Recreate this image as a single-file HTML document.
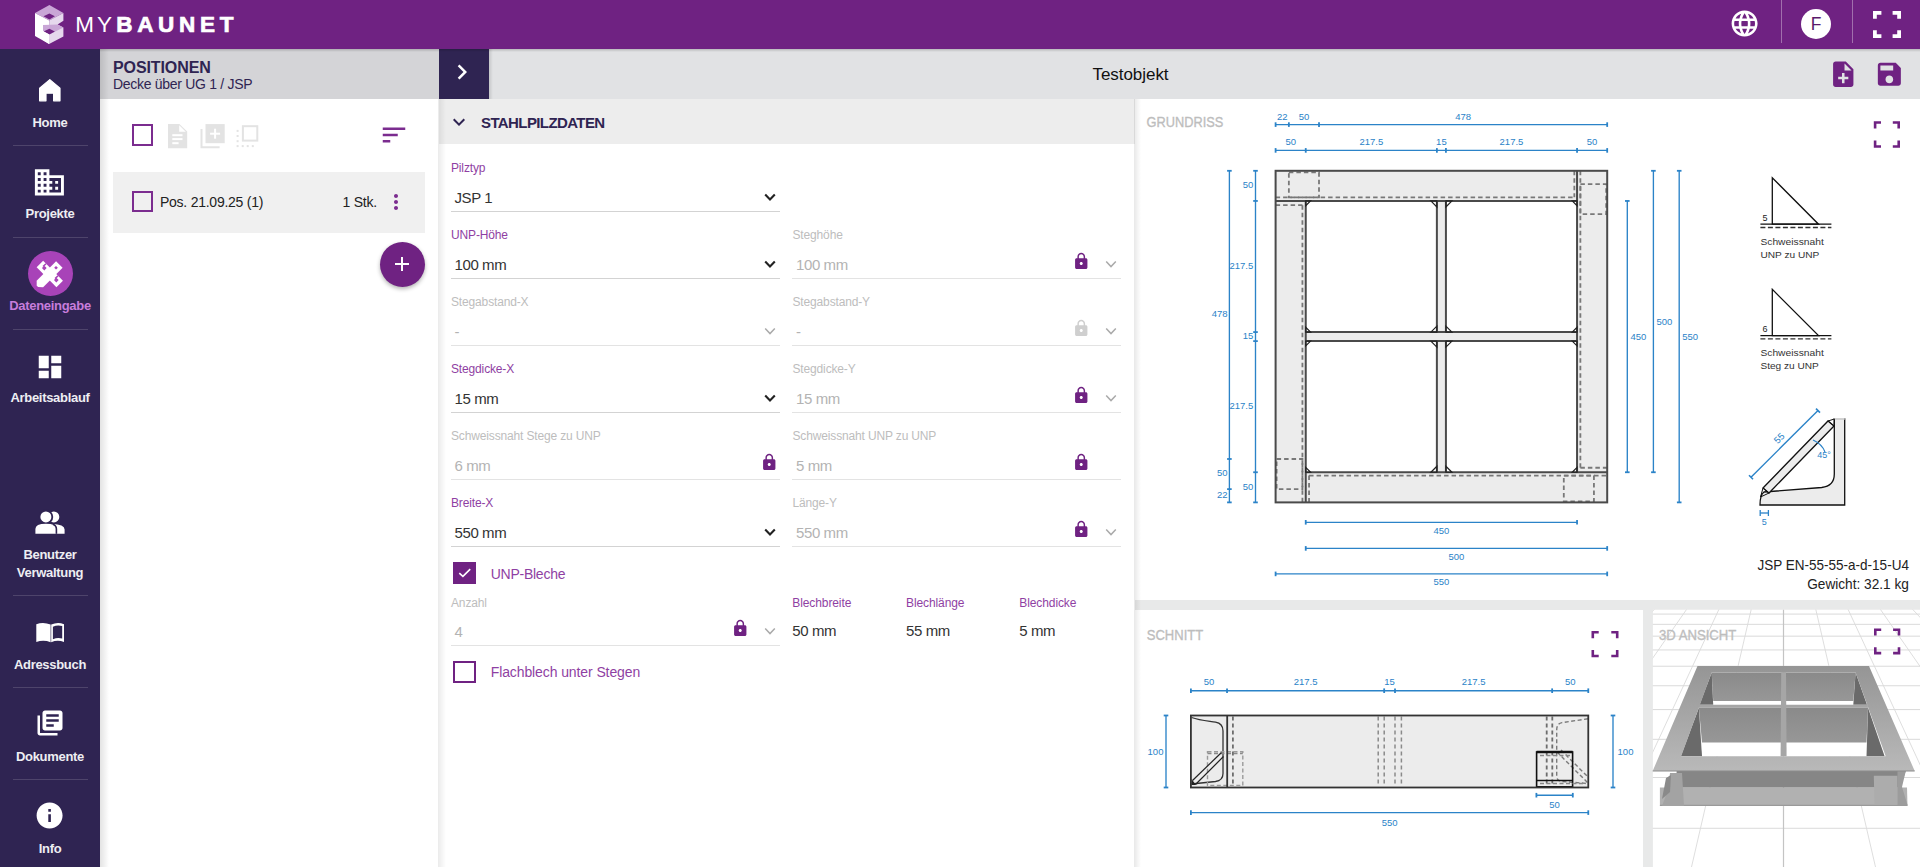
<!DOCTYPE html>
<html><head><meta charset="utf-8">
<style>
*{box-sizing:border-box;margin:0;padding:0}
html,body{width:1920px;height:867px;overflow:hidden;background:#fff;font-family:"Liberation Sans",sans-serif}
.r,.t,.ic{position:absolute}
.t{white-space:nowrap;line-height:1}
</style></head>
<body>
<div class="r" style="left:100px;top:49px;width:339px;height:818px;background:#fff"></div>
<div class="r" style="left:100px;top:49px;width:339px;height:50px;background:#d4d4d7"></div>
<div class="r" style="left:439px;top:49px;width:1481px;height:50px;background:#e1e2e4"></div>
<div class="r" style="left:439px;top:49px;width:50px;height:50px;background:#2f2452"></div>
<div class="r" style="left:439px;top:99px;width:696px;height:768px;background:#fff"></div>
<div class="r" style="left:439px;top:99px;width:696px;height:45px;background:#ededed"></div>
<div class="r" style="left:1135px;top:99px;width:785px;height:768px;background:#fff"></div>
<div class="r" style="left:1135px;top:600px;width:785px;height:10px;background:#e8e9e9"></div>
<div class="r" style="left:1643px;top:610px;width:10px;height:257px;background:#e8e9e9"></div>
<div class="r" style="left:438px;top:99px;width:8px;height:768px;background:linear-gradient(to right,rgba(0,0,0,0.08),rgba(0,0,0,0))"></div>
<div class="r" style="left:1134px;top:99px;width:7px;height:768px;background:linear-gradient(to right,rgba(0,0,0,0.09),rgba(0,0,0,0))"></div>
<div class="r" style="left:0px;top:0px;width:1920px;height:49px;background:#6f2282"></div>
<div class="r" style="left:0px;top:49px;width:1920px;height:3px;background:linear-gradient(rgba(0,0,0,0.18),rgba(0,0,0,0))"></div>
<svg class="ic" style="left:0;top:0;width:100px;height:49px" viewBox="0 0 100 49">
<polygon fill="#c9a6d6" points="49.4,4.9 63.4,12.9 49.2,20.5 35,13.1"/>
<polygon fill="#6f2282" points="49.4,13.4 54.9,16.3 49.4,19.5 43.5,16.3"/>
<polygon fill="#ffffff" points="35,13.1 49.2,20.5 49.1,43.9 35,36"/>
<polygon fill="#e6d8ed" points="49.2,20.5 63.4,12.9 63.4,20.8 57.6,24.6 63.4,27.6 63.4,36.5 49.1,43.9"/>
<polygon fill="#c9a6d6" points="43,25 57.6,24.6 63.4,27.6 49.4,34.4 43,31"/>
<polygon fill="#6f2282" points="49.4,28.8 54.9,31.6 49.4,34.4 43.5,31.6"/>
<polygon fill="#ffffff" points="43,31 49.4,34.4 49.1,43.9 43,40"/>
</svg>
<div class="t" style="left:75.3px;top:13.6px;font-size:22.5px;color:#fff;letter-spacing:2.9px">MY</div>
<div class="t" style="left:116.2px;top:13.6px;font-size:22.5px;color:#fff;font-weight:700;letter-spacing:4.7px;-webkit-text-stroke:0.7px #fff">BAUNET</div>
<svg class="ic" style="left:1728.6px;top:8.4px;width:31.2px;height:31.2px" viewBox="0 0 24 24"><path fill="#fff" d="M11.99 2C6.47 2 2 6.48 2 12s4.47 10 9.99 10C17.52 22 22 17.52 22 12S17.52 2 11.99 2zm6.93 6h-2.95c-.32-1.25-.78-2.450-1.38-3.56 1.84.63 3.37 1.91 4.33 3.56zM12 4.04c.83 1.2 1.48 2.53 1.91 3.96h-3.82c.43-1.43 1.08-2.76 1.91-3.96zM4.26 14C4.1 13.36 4 12.69 4 12s.1-1.36.26-2h3.38c-.08.66-.14 1.32-.14 2 0 .68.06 1.34.14 2H4.26zm.82 2h2.95c.32 1.25.78 2.45 1.380 3.56-1.84-.63-3.37-1.9-4.33-3.56zm2.95-8H5.08c.96-1.66 2.49-2.93 4.33-3.56C8.81 5.55 8.35 6.75 8.03 8zM12 19.96c-.83-1.2-1.48-2.53-1.91-3.96h3.82c-.43 1.43-1.08 2.76-1.91 3.96zM14.34 14H9.66c-.09-.66-.16-1.32-.16-2 0-.68.07-1.35.16-2h4.68c.09.65.16 1.32.16 2 0 .68-.07 1.34-.16 2zm.25 5.56c.6-1.11 1.06-2.31 1.38-3.56h2.95c-.96 1.65-2.49 2.93-4.33 3.560zM16.36 14c.08-.66.14-1.32.14-2 0-.68-.06-1.34-.14-2h3.38c.16.64.26 1.31.26 2s-.1 1.36-.26 2h-3.38z"/></svg>
<div class="r" style="left:1781px;top:0px;width:1px;height:43px;background:rgba(255,255,255,0.35)"></div>
<div class="r" style="left:1800.6px;top:8.8px;width:30.4px;height:30.4px;border-radius:50%;background:#fff"></div>
<div class="t" style="left:1516.2px;width:600px;text-align:center;top:16.0px;font-size:17.5px;color:#5a1a6b">F</div>
<div class="r" style="left:1852px;top:0px;width:1px;height:43px;background:rgba(255,255,255,0.35)"></div>
<svg class="ic" style="left:1873px;top:11px;width:28px;height:27px" viewBox="0 0 28 27">
<path fill="#fff" d="M0 0h8.4v3.8H3.8v4H0z M28 0h-8.4v3.8h4.6v4H28z M0 27h8.4v-3.8H3.8v-4H0z M28 27h-8.4v-3.8h4.6v-4H28z"/></svg>
<div class="r" style="left:0px;top:49px;width:100px;height:818px;background:#2f2452"></div>
<div class="r" style="left:100px;top:49px;width:9px;height:818px;background:linear-gradient(to right,rgba(0,0,0,0.11),rgba(0,0,0,0))"></div>
<div class="r" style="left:13px;top:145px;width:75px;height:1px;background:rgba(255,255,255,0.15)"></div>
<div class="r" style="left:13px;top:237px;width:75px;height:1px;background:rgba(255,255,255,0.15)"></div>
<div class="r" style="left:13px;top:329px;width:75px;height:1px;background:rgba(255,255,255,0.15)"></div>
<div class="r" style="left:13px;top:595px;width:75px;height:1px;background:rgba(255,255,255,0.15)"></div>
<div class="r" style="left:13px;top:687px;width:75px;height:1px;background:rgba(255,255,255,0.15)"></div>
<div class="r" style="left:13px;top:779px;width:75px;height:1px;background:rgba(255,255,255,0.15)"></div>
<svg class="ic" style="left:0;top:0;width:100px;height:120px" viewBox="0 0 100 120"><path fill="#fff" stroke="#fff" stroke-width="1.2" stroke-linejoin="round" d="M39.6 88.2 L49.8 79.6 L60 88.2 V100.8 H53.6 V93.2 H46 V100.8 H39.6 Z"/></svg>
<div class="t" style="left:-250.0px;width:600px;text-align:center;top:116.0px;font-size:13px;color:#eeeef2;font-weight:700;letter-spacing:-0.3px">Home</div>
<svg class="ic" style="left:32.1px;top:164.7px;width:34.8px;height:34.8px" viewBox="0 0 24 24"><path fill="#fff" d="M12 7V3H2v18h20V7H12zM6 19H4v-2h2v2zm0-4H4v-2h2v2zm0-4H4V9h2v2zm0-4H4V5h2v2zm4 12H8v-2h2v2zm0-4H8v-2h2v2zm0-4H8V9h2v2zm0-4H8V5h2v2zm10 12h-8v-2h2v-2h-2v-2h2v-2h-2V9h8v10zm-2-8h-2v2h2v-2zm0 4h-2v2h2v-2z"/></svg>
<div class="t" style="left:-250.0px;width:600px;text-align:center;top:207.0px;font-size:13px;color:#eeeef2;font-weight:700;letter-spacing:-0.3px">Projekte</div>
<div class="r" style="left:28.2px;top:251.2px;width:45px;height:45px;border-radius:50%;background:#a843b8"></div>
<svg class="ic" style="left:0;top:240px;width:100px;height:60px" viewBox="0 240 100 60"><g transform="translate(49.8 274) rotate(-45)"><path d="M-14 -4.6 H13.5 V4.6 H-14 L-17.5 1 V-1 Z" fill="#fff"/><rect x="7.5" y="-1.3" width="2.6" height="2.6" fill="#a843b8"/></g><g transform="translate(49.8 274) rotate(45)"><rect x="-14" y="-4.6" width="28" height="9.2" fill="#fff"/><path d="M-10 -4.6 V-1.2 H-7.2 V0.6 H-9 V-1.2" fill="none" stroke="#a843b8" stroke-width="1.5"/><path d="M7 -4.6 V-1.2 H9.8 V0.6 H8 V-1.2" fill="none" stroke="#a843b8" stroke-width="1.5"/></g></svg>
<div class="t" style="left:-250.0px;width:600px;text-align:center;top:299.0px;font-size:13px;color:#c77ddb;font-weight:700;letter-spacing:-0.3px">Dateneingabe</div>
<svg class="ic" style="left:35.4px;top:351.5px;width:30px;height:30px" viewBox="0 0 24 24"><path fill="#fff" d="M3 13h8V3H3v10zm0 8h8v-6H3v6zm10 0h8V11h-8v10zm0-18v6h8V3h-8z"/></svg>
<div class="t" style="left:-250.0px;width:600px;text-align:center;top:391.0px;font-size:13px;color:#eeeef2;font-weight:700;letter-spacing:-0.3px">Arbeitsablauf</div>
<svg class="ic" style="left:0;top:500px;width:100px;height:40px" viewBox="0 500 100 40"><circle cx="53.8" cy="516.9" r="5.5" fill="#fff"/><circle cx="45.9" cy="516.9" r="7.3" fill="#2f2452"/><circle cx="45.9" cy="516.9" r="5.5" fill="#fff"/><path d="M56.6 533.7 V528.5 Q56.6 524.3 52 524 Q64.6 524.3 64.6 529.5 V533.7 Z" fill="#fff"/><path d="M35.4 533.7 V529 Q35.4 523.8 45.9 523.8 Q56.4 523.8 56.4 529 V533.7 Z" fill="#fff" stroke="#2f2452" stroke-width="0"/><path d="M56.4 533.7 V529 Q56.4 525.5 53 524.2" stroke="#2f2452" stroke-width="1.6" fill="none"/></svg>
<div class="t" style="left:-250.0px;width:600px;text-align:center;top:547.6px;font-size:13px;color:#eeeef2;font-weight:700;letter-spacing:-0.3px">Benutzer</div>
<div class="t" style="left:-250.0px;width:600px;text-align:center;top:565.6px;font-size:13px;color:#eeeef2;font-weight:700;letter-spacing:-0.3px">Verwaltung</div>
<svg class="ic" style="left:0;top:600px;width:100px;height:60px" viewBox="0 600 100 60">
<path fill="#fff" d="M36.3 624.2 Q43.5 621.8 50.6 624.6 V642.2 Q43.5 639.6 36.3 642 Z"/>
<path fill="#fff" fill-rule="evenodd" d="M51.2 624.6 Q57.6 621.8 64 624.2 V642 Q57.6 639.6 51.2 642.2 Z M52.9 626.7 Q57.6 624.6 62.2 626.1 V638.6 Q57.6 637.2 52.9 639.3 Z"/></svg>
<div class="t" style="left:-250.0px;width:600px;text-align:center;top:658.0px;font-size:13px;color:#eeeef2;font-weight:700;letter-spacing:-0.3px">Adressbuch</div>
<svg class="ic" style="left:34.5px;top:708.2px;width:30px;height:30px" viewBox="0 0 24 24"><path fill="#fff" d="M4 6H2v14c0 1.1.9 2 2 2h14v-2H4V6zm16-4H8c-1.1 0-2 .9-2 2v12c0 1.1.9 2 2 2h12c1.1 0 2-.9 2-2V4c0-1.1-.9-2-2-2zm-1 9H9V9h10v2zm-4 4H9v-2h6v2zm4-8H9V5h10v2z"/></svg>
<div class="t" style="left:-250.0px;width:600px;text-align:center;top:750.0px;font-size:13px;color:#eeeef2;font-weight:700;letter-spacing:-0.3px">Dokumente</div>
<svg class="ic" style="left:34px;top:800px;width:31.2px;height:31.2px" viewBox="0 0 24 24"><path fill="#fff" d="M12 2C6.48 2 2 6.48 2 12s4.48 10 10 10 10-4.48 10-10S17.52 2 12 2zm1 15h-2v-6h2v6zm0-8h-2V7h2v2z"/></svg>
<div class="t" style="left:-250.0px;width:600px;text-align:center;top:841.6px;font-size:13px;color:#eeeef2;font-weight:700;letter-spacing:-0.3px">Info</div>
<div class="t" style="left:113.0px;top:59.7px;font-size:16px;color:#2f2452;font-weight:700;letter-spacing:-0.1px">POSITIONEN</div>
<div class="t" style="left:113.0px;top:77.1px;font-size:14px;color:#2f2452;letter-spacing:-0.3px">Decke über UG 1 / JSP</div>
<div class="r" style="left:132px;top:124px;width:21px;height:22px;border:2px solid #7b2c8f"></div>
<svg class="ic" style="left:150px;top:110px;width:120px;height:50px" viewBox="150 110 120 50">
<path fill="#e3e3e3" d="M168 124.1 H179.4 L187.2 131.6 V148.3 H168 Z"/>
<path fill="#fff" d="M179.2 125.2 V131.8 H185.8 Z"/>
<rect x="172.3" y="134.2" width="10.2" height="2" fill="#fff"/><rect x="172.3" y="138.1" width="10.2" height="2" fill="#fff"/><rect x="172.3" y="142.2" width="6.3" height="2" fill="#fff"/>
<path fill="#e3e3e3" d="M200.5 129.1 H202.5 V146.3 H219.6 V148.3 H200.5 Z"/>
<rect x="205.5" y="124.1" width="19.2" height="19.1" fill="#e3e3e3"/>
<rect x="210.1" y="132.7" width="10" height="2" fill="#fff"/><rect x="214.1" y="128.7" width="2" height="10" fill="#fff"/>
<rect x="242.9" y="126.2" width="14.4" height="14.4" fill="none" stroke="#e3e3e3" stroke-width="2"/>
<g fill="#e3e3e3"><rect x="236.6" y="129.9" width="2" height="2"/><rect x="236.6" y="135" width="2" height="2"/><rect x="236.6" y="140.2" width="2" height="2"/><rect x="236.6" y="145.1" width="2" height="2"/><rect x="241.7" y="145.1" width="2" height="2"/><rect x="246.7" y="145.1" width="2" height="2"/><rect x="251.8" y="145.1" width="2" height="2"/></g>
</svg>
<svg class="ic" style="left:378.5px;top:119.5px;width:30px;height:30px" viewBox="0 0 24 24"><path fill="#7b2c8f" d="M3 18h6v-2H3v2zM3 6v2h18V6H3zm0 7h12v-2H3v2z"/></svg>
<div class="r" style="left:113px;top:172px;width:312px;height:61px;background:#f0f0f0"></div>
<div class="r" style="left:132px;top:191px;width:21px;height:21px;border:2px solid #7b2c8f"></div>
<div class="t" style="left:160.0px;top:195.1px;font-size:14px;color:#222;letter-spacing:-0.25px">Pos. 21.09.25 (1)</div>
<div class="t" style="left:-223.0px;width:600px;text-align:right;top:195.1px;font-size:14px;color:#222;letter-spacing:-0.2px">1 Stk.</div>
<svg class="ic" style="left:383.5px;top:189.5px;width:24px;height:24px" viewBox="0 0 24 24"><path fill="#7b2c8f" d="M12 8c1.1 0 2-.9 2-2s-.9-2-2-2-2 .9-2 2 .9 2 2 2zm0 2c-1.1 0-2 .9-2 2s.9 2 2 2 2-.9 2-2-.9-2-2-2zm0 6c-1.1 0-2 .9-2 2s.9 2 2 2 2-.9 2-2-.9-2-2-2z"/></svg>
<div class="r" style="left:379.8px;top:241.5px;width:45px;height:45px;border-radius:50%;background:#6f2282;box-shadow:0 2px 4px rgba(0,0,0,0.3)"></div>
<svg class="ic" style="left:390.3px;top:252px;width:24px;height:24px" viewBox="0 0 24 24"><path fill="#fff" d="M19 13h-6v6h-2v-6H5v-2h6V5h2v6h6v2z"/></svg>
<svg class="ic" style="left:446.8px;top:57.3px;width:30px;height:30px" viewBox="0 0 24 24"><path fill="#fff" d="M10 6L8.59 7.41 13.17 12l-4.58 4.59L10 18l6-6z"/></svg>
<div class="r" style="left:488.5px;top:49px;width:4px;height:50px;background:linear-gradient(to right,rgba(0,0,0,0.12),rgba(0,0,0,0))"></div>
<div class="t" style="left:830.5px;width:600px;text-align:center;top:66.1px;font-size:17px;color:#111;letter-spacing:-0.05px">Testobjekt</div>
<svg class="ic" style="left:1828px;top:58.7px;width:30.5px;height:30.5px" viewBox="0 0 24 24"><path fill="#6f2282" d="M14 2H6c-1.1 0-1.99.9-1.99 2L4 20c0 1.1.89 2 1.99 2H18c1.1 0 2-.9 2-2V8l-6-6zm2 14h-3v3h-2v-3H8v-2h3v-3h2v3h3v2zm-3-7V3.5L18.5 9H13z"/></svg>
<svg class="ic" style="left:1874.2px;top:58.7px;width:30.7px;height:30.7px" viewBox="0 0 24 24"><path fill="#6f2282" d="M17 3H5c-1.11 0-2 .9-2 2v14c0 1.1.89 2 2 2h14c1.1 0 2-.9 2-2V7l-4-4zm-5 16c-1.66 0-3-1.34-3-3s1.34-3 3-3 3 1.34 3 3-1.34 3-3 3zm3-10H5V5h10v4z"/></svg>
<svg class="ic" style="left:446.8px;top:110.2px;width:24px;height:24px" viewBox="0 0 24 24"><path fill="#2f2452" d="M16.59 8.59L12 13.17 7.41 8.59 6 10l6 6 6-6z"/></svg>
<div class="t" style="left:481.0px;top:115.3px;font-size:15px;color:#2f2452;font-weight:700;letter-spacing:-0.6px">STAHLPILZDATEN</div>
<div class="t" style="left:451.0px;top:161.7px;font-size:12px;color:#8f3fa3;letter-spacing:-0.15px">Pilztyp</div>
<div class="t" style="left:454.5px;top:189.5px;font-size:15px;color:#333;letter-spacing:-0.4px">JSP 1</div>
<div class="r" style="left:450.5px;top:211px;width:329.5px;height:1px;background:#d3d3d3"></div>
<svg class="ic" style="left:764px;top:192.8px;width:12px;height:9px" viewBox="0 0 12 9"><path fill="none" stroke="#222" stroke-width="2.1" d="M1.2 1.6 L6 6.6 L10.8 1.6"/></svg>
<div class="t" style="left:451.0px;top:228.7px;font-size:12px;color:#8f3fa3;letter-spacing:-0.15px">UNP-Höhe</div>
<div class="t" style="left:454.5px;top:256.5px;font-size:15px;color:#333;letter-spacing:-0.4px">100 mm</div>
<div class="r" style="left:450.5px;top:278px;width:329.5px;height:1px;background:#d3d3d3"></div>
<svg class="ic" style="left:764px;top:259.8px;width:12px;height:9px" viewBox="0 0 12 9"><path fill="none" stroke="#222" stroke-width="2.1" d="M1.2 1.6 L6 6.6 L10.8 1.6"/></svg>
<div class="t" style="left:792.5px;top:228.7px;font-size:12px;color:#bdbdbd;letter-spacing:-0.15px">Steghöhe</div>
<div class="t" style="left:796.0px;top:256.5px;font-size:15px;color:#b3b3b3;letter-spacing:-0.4px">100 mm</div>
<div class="r" style="left:792px;top:278px;width:329px;height:1px;background:#e3e3e3"></div>
<svg class="ic" style="left:1072.3px;top:252.4px;width:18.5px;height:18.5px" viewBox="0 0 24 24"><path fill="#6f2282" d="M18 8h-1V6c0-2.76-2.24-5-5-5S7 3.24 7 6v2H6c-1.1 0-2 .9-2 2v10c0 1.1.9 2 2 2h12c1.1 0 2-.9 2-2V10c0-1.1-.9-2-2-2zm-6 9c-1.1 0-2-.9-2-2s.9-2 2-2 2 .9 2 2-.9 2-2 2zm3.1-9H8.9V6c0-1.71 1.39-3.1 3.1-3.1 1.71 0 3.1 1.39 3.1 3.1v2z"/></svg>
<svg class="ic" style="left:1105px;top:259.8px;width:12px;height:9px" viewBox="0 0 12 9"><path fill="none" stroke="#aaaaaa" stroke-width="1.5" d="M1.2 1.6 L6 6.6 L10.8 1.6"/></svg>
<div class="t" style="left:451.0px;top:295.7px;font-size:12px;color:#bdbdbd;letter-spacing:-0.15px">Stegabstand-X</div>
<div class="t" style="left:454.5px;top:323.5px;font-size:15px;color:#b3b3b3;letter-spacing:-0.4px">-</div>
<div class="r" style="left:450.5px;top:345px;width:329.5px;height:1px;background:#e3e3e3"></div>
<svg class="ic" style="left:764px;top:326.8px;width:12px;height:9px" viewBox="0 0 12 9"><path fill="none" stroke="#aaaaaa" stroke-width="1.5" d="M1.2 1.6 L6 6.6 L10.8 1.6"/></svg>
<div class="t" style="left:792.5px;top:295.7px;font-size:12px;color:#bdbdbd;letter-spacing:-0.15px">Stegabstand-Y</div>
<div class="t" style="left:796.0px;top:323.5px;font-size:15px;color:#b3b3b3;letter-spacing:-0.4px">-</div>
<div class="r" style="left:792px;top:345px;width:329px;height:1px;background:#e3e3e3"></div>
<svg class="ic" style="left:1072.3px;top:319.4px;width:18.5px;height:18.5px" viewBox="0 0 24 24"><path fill="#cfcfcf" d="M18 8h-1V6c0-2.76-2.24-5-5-5S7 3.24 7 6v2H6c-1.1 0-2 .9-2 2v10c0 1.1.9 2 2 2h12c1.1 0 2-.9 2-2V10c0-1.1-.9-2-2-2zm-6 9c-1.1 0-2-.9-2-2s.9-2 2-2 2 .9 2 2-.9 2-2 2zm3.1-9H8.9V6c0-1.71 1.39-3.1 3.1-3.1 1.71 0 3.1 1.39 3.1 3.1v2z"/></svg>
<svg class="ic" style="left:1105px;top:326.8px;width:12px;height:9px" viewBox="0 0 12 9"><path fill="none" stroke="#aaaaaa" stroke-width="1.5" d="M1.2 1.6 L6 6.6 L10.8 1.6"/></svg>
<div class="t" style="left:451.0px;top:362.7px;font-size:12px;color:#8f3fa3;letter-spacing:-0.15px">Stegdicke-X</div>
<div class="t" style="left:454.5px;top:390.5px;font-size:15px;color:#333;letter-spacing:-0.4px">15 mm</div>
<div class="r" style="left:450.5px;top:412px;width:329.5px;height:1px;background:#d3d3d3"></div>
<svg class="ic" style="left:764px;top:393.8px;width:12px;height:9px" viewBox="0 0 12 9"><path fill="none" stroke="#222" stroke-width="2.1" d="M1.2 1.6 L6 6.6 L10.8 1.6"/></svg>
<div class="t" style="left:792.5px;top:362.7px;font-size:12px;color:#bdbdbd;letter-spacing:-0.15px">Stegdicke-Y</div>
<div class="t" style="left:796.0px;top:390.5px;font-size:15px;color:#b3b3b3;letter-spacing:-0.4px">15 mm</div>
<div class="r" style="left:792px;top:412px;width:329px;height:1px;background:#e3e3e3"></div>
<svg class="ic" style="left:1072.3px;top:386.4px;width:18.5px;height:18.5px" viewBox="0 0 24 24"><path fill="#6f2282" d="M18 8h-1V6c0-2.76-2.24-5-5-5S7 3.24 7 6v2H6c-1.1 0-2 .9-2 2v10c0 1.1.9 2 2 2h12c1.1 0 2-.9 2-2V10c0-1.1-.9-2-2-2zm-6 9c-1.1 0-2-.9-2-2s.9-2 2-2 2 .9 2 2-.9 2-2 2zm3.1-9H8.9V6c0-1.71 1.39-3.1 3.1-3.1 1.71 0 3.1 1.39 3.1 3.1v2z"/></svg>
<svg class="ic" style="left:1105px;top:393.8px;width:12px;height:9px" viewBox="0 0 12 9"><path fill="none" stroke="#aaaaaa" stroke-width="1.5" d="M1.2 1.6 L6 6.6 L10.8 1.6"/></svg>
<div class="t" style="left:451.0px;top:429.7px;font-size:12px;color:#bdbdbd;letter-spacing:-0.15px">Schweissnaht Stege zu UNP</div>
<div class="t" style="left:454.5px;top:457.5px;font-size:15px;color:#b3b3b3;letter-spacing:-0.4px">6 mm</div>
<div class="r" style="left:450.5px;top:479px;width:329.5px;height:1px;background:#e3e3e3"></div>
<svg class="ic" style="left:760.3px;top:453.4px;width:18.5px;height:18.5px" viewBox="0 0 24 24"><path fill="#6f2282" d="M18 8h-1V6c0-2.76-2.24-5-5-5S7 3.24 7 6v2H6c-1.1 0-2 .9-2 2v10c0 1.1.9 2 2 2h12c1.1 0 2-.9 2-2V10c0-1.1-.9-2-2-2zm-6 9c-1.1 0-2-.9-2-2s.9-2 2-2 2 .9 2 2-.9 2-2 2zm3.1-9H8.9V6c0-1.71 1.39-3.1 3.1-3.1 1.71 0 3.1 1.39 3.1 3.1v2z"/></svg>
<div class="t" style="left:792.5px;top:429.7px;font-size:12px;color:#bdbdbd;letter-spacing:-0.15px">Schweissnaht UNP zu UNP</div>
<div class="t" style="left:796.0px;top:457.5px;font-size:15px;color:#b3b3b3;letter-spacing:-0.4px">5 mm</div>
<div class="r" style="left:792px;top:479px;width:329px;height:1px;background:#e3e3e3"></div>
<svg class="ic" style="left:1072.3px;top:453.4px;width:18.5px;height:18.5px" viewBox="0 0 24 24"><path fill="#6f2282" d="M18 8h-1V6c0-2.76-2.24-5-5-5S7 3.24 7 6v2H6c-1.1 0-2 .9-2 2v10c0 1.1.9 2 2 2h12c1.1 0 2-.9 2-2V10c0-1.1-.9-2-2-2zm-6 9c-1.1 0-2-.9-2-2s.9-2 2-2 2 .9 2 2-.9 2-2 2zm3.1-9H8.9V6c0-1.71 1.39-3.1 3.1-3.1 1.71 0 3.1 1.39 3.1 3.1v2z"/></svg>
<div class="t" style="left:451.0px;top:496.7px;font-size:12px;color:#8f3fa3;letter-spacing:-0.15px">Breite-X</div>
<div class="t" style="left:454.5px;top:524.5px;font-size:15px;color:#333;letter-spacing:-0.4px">550 mm</div>
<div class="r" style="left:450.5px;top:546px;width:329.5px;height:1px;background:#d3d3d3"></div>
<svg class="ic" style="left:764px;top:527.8px;width:12px;height:9px" viewBox="0 0 12 9"><path fill="none" stroke="#222" stroke-width="2.1" d="M1.2 1.6 L6 6.6 L10.8 1.6"/></svg>
<div class="t" style="left:792.5px;top:496.7px;font-size:12px;color:#bdbdbd;letter-spacing:-0.15px">Länge-Y</div>
<div class="t" style="left:796.0px;top:524.5px;font-size:15px;color:#b3b3b3;letter-spacing:-0.4px">550 mm</div>
<div class="r" style="left:792px;top:546px;width:329px;height:1px;background:#e3e3e3"></div>
<svg class="ic" style="left:1072.3px;top:520.4px;width:18.5px;height:18.5px" viewBox="0 0 24 24"><path fill="#6f2282" d="M18 8h-1V6c0-2.76-2.24-5-5-5S7 3.24 7 6v2H6c-1.1 0-2 .9-2 2v10c0 1.1.9 2 2 2h12c1.1 0 2-.9 2-2V10c0-1.1-.9-2-2-2zm-6 9c-1.1 0-2-.9-2-2s.9-2 2-2 2 .9 2 2-.9 2-2 2zm3.1-9H8.9V6c0-1.71 1.39-3.1 3.1-3.1 1.71 0 3.1 1.39 3.1 3.1v2z"/></svg>
<svg class="ic" style="left:1105px;top:527.8px;width:12px;height:9px" viewBox="0 0 12 9"><path fill="none" stroke="#aaaaaa" stroke-width="1.5" d="M1.2 1.6 L6 6.6 L10.8 1.6"/></svg>
<div class="r" style="left:453px;top:561.5px;width:22.5px;height:22.5px;background:#6f2282"></div>
<svg class="ic" style="left:455.5px;top:564px;width:17.5px;height:17.5px" viewBox="0 0 24 24"><path fill="none" stroke="#fff" stroke-width="2.2" d="M4.5 12.5 L9.5 17 L19.5 7"/></svg>
<div class="t" style="left:490.7px;top:567.1px;font-size:14px;color:#8f3fa3;letter-spacing:-0.25px">UNP-Bleche</div>
<div class="t" style="left:451.0px;top:596.5px;font-size:12px;color:#bdbdbd;letter-spacing:-0.15px">Anzahl</div>
<div class="t" style="left:454.5px;top:623.5px;font-size:15px;color:#b3b3b3;letter-spacing:-0.4px">4</div>
<div class="r" style="left:450.5px;top:645px;width:329.5px;height:1px;background:#e3e3e3"></div>
<svg class="ic" style="left:731.3px;top:619.4px;width:18.5px;height:18.5px" viewBox="0 0 24 24"><path fill="#6f2282" d="M18 8h-1V6c0-2.76-2.24-5-5-5S7 3.24 7 6v2H6c-1.1 0-2 .9-2 2v10c0 1.1.9 2 2 2h12c1.1 0 2-.9 2-2V10c0-1.1-.9-2-2-2zm-6 9c-1.1 0-2-.9-2-2s.9-2 2-2 2 .9 2 2-.9 2-2 2zm3.1-9H8.9V6c0-1.71 1.39-3.1 3.1-3.1 1.71 0 3.1 1.39 3.1 3.1v2z"/></svg>
<svg class="ic" style="left:764px;top:626.8px;width:12px;height:9px" viewBox="0 0 12 9"><path fill="none" stroke="#aaaaaa" stroke-width="1.5" d="M1.2 1.6 L6 6.6 L10.8 1.6"/></svg>
<div class="t" style="left:792.3px;top:596.5px;font-size:12px;color:#8f3fa3;letter-spacing:-0.1px">Blechbreite</div>
<div class="t" style="left:906.0px;top:596.5px;font-size:12px;color:#8f3fa3;letter-spacing:-0.1px">Blechlänge</div>
<div class="t" style="left:1019.3px;top:596.5px;font-size:12px;color:#8f3fa3;letter-spacing:-0.1px">Blechdicke</div>
<div class="t" style="left:792.3px;top:623.1px;font-size:15px;color:#333;letter-spacing:-0.4px">50 mm</div>
<div class="t" style="left:906.0px;top:623.1px;font-size:15px;color:#333;letter-spacing:-0.4px">55 mm</div>
<div class="t" style="left:1019.3px;top:623.1px;font-size:15px;color:#333;letter-spacing:-0.4px">5 mm</div>
<div class="r" style="left:453px;top:660.5px;width:22.5px;height:22px;border:2px solid #6f2282"></div>
<div class="t" style="left:490.7px;top:664.8px;font-size:14px;color:#8f3fa3;letter-spacing:-0.1px">Flachblech unter Stegen</div>
<svg class="ic" style="left:0;top:0;width:1920px;height:867px" viewBox="0 0 1920 867" font-family="Liberation Sans, sans-serif"><rect x="1275.60" y="170.80" width="331.60" height="331.59" fill="#ececec" stroke="none" stroke-width="0"/>
<rect x="1305.74" y="200.95" width="271.31" height="271.30" fill="#fff" stroke="none" stroke-width="0"/>
<rect x="1436.88" y="200.95" width="9.04" height="271.30" fill="#ececec" stroke="none" stroke-width="0"/>
<rect x="1305.74" y="332.08" width="271.31" height="9.04" fill="#ececec" stroke="none" stroke-width="0"/>
<line x1="1275.60" y1="197.33" x2="1574.34" y2="197.33" stroke="#787878" stroke-width="1.8" stroke-dasharray="4.5,3"/>
<line x1="1574.34" y1="170.80" x2="1574.34" y2="197.33" stroke="#787878" stroke-width="1.8" stroke-dasharray="4.5,3"/>
<line x1="1580.37" y1="170.80" x2="1580.37" y2="467.73" stroke="#787878" stroke-width="1.8" stroke-dasharray="4.5,3"/>
<line x1="1580.37" y1="467.73" x2="1607.19" y2="467.73" stroke="#787878" stroke-width="1.8" stroke-dasharray="4.5,3"/>
<line x1="1309.06" y1="475.57" x2="1607.19" y2="475.57" stroke="#787878" stroke-width="1.8" stroke-dasharray="4.5,3"/>
<line x1="1309.06" y1="475.57" x2="1309.06" y2="502.39" stroke="#787878" stroke-width="1.8" stroke-dasharray="4.5,3"/>
<line x1="1302.43" y1="205.17" x2="1302.43" y2="502.39" stroke="#787878" stroke-width="1.8" stroke-dasharray="4.5,3"/>
<line x1="1275.60" y1="205.17" x2="1302.43" y2="205.17" stroke="#787878" stroke-width="1.8" stroke-dasharray="4.5,3"/>
<rect x="1288.86" y="172.30" width="30.14" height="25.03" fill="none" stroke="#787878" stroke-width="1.8" stroke-dasharray="4.5,3"/>
<rect x="1580.37" y="184.06" width="25.83" height="30.14" fill="none" stroke="#787878" stroke-width="1.8" stroke-dasharray="4.5,3"/>
<rect x="1563.79" y="475.57" width="30.14" height="25.83" fill="none" stroke="#787878" stroke-width="1.8" stroke-dasharray="4.5,3"/>
<rect x="1276.60" y="458.99" width="25.83" height="30.14" fill="none" stroke="#787878" stroke-width="1.8" stroke-dasharray="4.5,3"/>
<rect x="1275.60" y="170.80" width="331.60" height="331.59" fill="none" stroke="#4a4a4a" stroke-width="2"/>
<line x1="1275.60" y1="200.95" x2="1577.05" y2="200.95" stroke="#4a4a4a" stroke-width="2"/>
<line x1="1577.05" y1="170.80" x2="1577.05" y2="472.25" stroke="#4a4a4a" stroke-width="2"/>
<line x1="1305.74" y1="472.25" x2="1607.19" y2="472.25" stroke="#4a4a4a" stroke-width="2"/>
<line x1="1305.74" y1="200.95" x2="1305.74" y2="502.39" stroke="#4a4a4a" stroke-width="2"/>
<line x1="1305.74" y1="332.08" x2="1577.05" y2="332.08" stroke="#4a4a4a" stroke-width="2"/>
<line x1="1305.74" y1="341.12" x2="1577.05" y2="341.12" stroke="#4a4a4a" stroke-width="2"/>
<line x1="1436.88" y1="200.95" x2="1436.88" y2="332.08" stroke="#4a4a4a" stroke-width="2"/>
<line x1="1445.92" y1="200.95" x2="1445.92" y2="332.08" stroke="#4a4a4a" stroke-width="2"/>
<line x1="1436.88" y1="341.12" x2="1436.88" y2="472.25" stroke="#4a4a4a" stroke-width="2"/>
<line x1="1445.92" y1="341.12" x2="1445.92" y2="472.25" stroke="#4a4a4a" stroke-width="2"/>
<polygon points="1436.88,200.95 1430.88,200.95 1436.88,206.95" fill="none" stroke="#222" stroke-width="1.2"/>
<polygon points="1436.88,332.08 1430.88,332.08 1436.88,326.08" fill="none" stroke="#222" stroke-width="1.2"/>
<polygon points="1436.88,341.12 1430.88,341.12 1436.88,347.12" fill="none" stroke="#222" stroke-width="1.2"/>
<polygon points="1436.88,472.25 1430.88,472.25 1436.88,466.25" fill="none" stroke="#222" stroke-width="1.2"/>
<polygon points="1445.92,200.95 1451.92,200.95 1445.92,206.95" fill="none" stroke="#222" stroke-width="1.2"/>
<polygon points="1445.92,332.08 1451.92,332.08 1445.92,326.08" fill="none" stroke="#222" stroke-width="1.2"/>
<polygon points="1445.92,341.12 1451.92,341.12 1445.92,347.12" fill="none" stroke="#222" stroke-width="1.2"/>
<polygon points="1445.92,472.25 1451.92,472.25 1445.92,466.25" fill="none" stroke="#222" stroke-width="1.2"/>
<polygon points="1305.74,332.08 1310.54,332.08 1305.74,327.28" fill="none" stroke="#222" stroke-width="1.2"/>
<polygon points="1305.74,341.12 1310.54,341.12 1305.74,345.92" fill="none" stroke="#222" stroke-width="1.2"/>
<polygon points="1305.74,200.95 1310.54,200.95 1305.74,205.75" fill="none" stroke="#222" stroke-width="1.2"/>
<polygon points="1305.74,472.25 1310.54,472.25 1305.74,467.45" fill="none" stroke="#222" stroke-width="1.2"/>
<polygon points="1577.05,332.08 1572.25,332.08 1577.05,327.28" fill="none" stroke="#222" stroke-width="1.2"/>
<polygon points="1577.05,341.12 1572.25,341.12 1577.05,345.92" fill="none" stroke="#222" stroke-width="1.2"/>
<polygon points="1577.05,200.95 1572.25,200.95 1577.05,205.75" fill="none" stroke="#222" stroke-width="1.2"/>
<polygon points="1577.05,472.25 1572.25,472.25 1577.05,467.45" fill="none" stroke="#222" stroke-width="1.2"/>
<line x1="1275.60" y1="124.60" x2="1607.19" y2="124.60" stroke="#2b83c8" stroke-width="1.35"/>
<line x1="1275.60" y1="122.30" x2="1275.60" y2="126.90" stroke="#2b83c8" stroke-width="1.8"/>
<line x1="1288.86" y1="122.30" x2="1288.86" y2="126.90" stroke="#2b83c8" stroke-width="1.8"/>
<line x1="1319.01" y1="122.30" x2="1319.01" y2="126.90" stroke="#2b83c8" stroke-width="1.8"/>
<line x1="1607.19" y1="122.30" x2="1607.19" y2="126.90" stroke="#2b83c8" stroke-width="1.8"/>
<text x="1282.23" y="120.30" font-size="9.5" fill="#2b83c8" text-anchor="middle">22</text>
<text x="1303.94" y="120.30" font-size="9.5" fill="#2b83c8" text-anchor="middle">50</text>
<text x="1463.10" y="120.30" font-size="9.5" fill="#2b83c8" text-anchor="middle">478</text>
<line x1="1275.60" y1="150.40" x2="1607.19" y2="150.40" stroke="#2b83c8" stroke-width="1.35"/>
<line x1="1275.60" y1="148.10" x2="1275.60" y2="152.70" stroke="#2b83c8" stroke-width="1.8"/>
<line x1="1305.74" y1="148.10" x2="1305.74" y2="152.70" stroke="#2b83c8" stroke-width="1.8"/>
<line x1="1436.88" y1="148.10" x2="1436.88" y2="152.70" stroke="#2b83c8" stroke-width="1.8"/>
<line x1="1445.92" y1="148.10" x2="1445.92" y2="152.70" stroke="#2b83c8" stroke-width="1.8"/>
<line x1="1577.05" y1="148.10" x2="1577.05" y2="152.70" stroke="#2b83c8" stroke-width="1.8"/>
<line x1="1607.19" y1="148.10" x2="1607.19" y2="152.70" stroke="#2b83c8" stroke-width="1.8"/>
<text x="1290.67" y="145.00" font-size="9.5" fill="#2b83c8" text-anchor="middle">50</text>
<text x="1371.31" y="145.00" font-size="9.5" fill="#2b83c8" text-anchor="middle">217.5</text>
<text x="1441.40" y="145.00" font-size="9.5" fill="#2b83c8" text-anchor="middle">15</text>
<text x="1511.48" y="145.00" font-size="9.5" fill="#2b83c8" text-anchor="middle">217.5</text>
<text x="1592.12" y="145.00" font-size="9.5" fill="#2b83c8" text-anchor="middle">50</text>
<line x1="1229.40" y1="170.80" x2="1229.40" y2="502.39" stroke="#2b83c8" stroke-width="1.35"/>
<line x1="1227.10" y1="170.80" x2="1231.70" y2="170.80" stroke="#2b83c8" stroke-width="1.8"/>
<line x1="1227.10" y1="458.99" x2="1231.70" y2="458.99" stroke="#2b83c8" stroke-width="1.8"/>
<line x1="1227.10" y1="489.13" x2="1231.70" y2="489.13" stroke="#2b83c8" stroke-width="1.8"/>
<line x1="1227.10" y1="502.39" x2="1231.70" y2="502.39" stroke="#2b83c8" stroke-width="1.8"/>
<text x="1227.50" y="317.29" font-size="9.5" fill="#2b83c8" text-anchor="end">478</text>
<text x="1227.50" y="476.46" font-size="9.5" fill="#2b83c8" text-anchor="end">50</text>
<text x="1227.50" y="498.16" font-size="9.5" fill="#2b83c8" text-anchor="end">22</text>
<line x1="1255.50" y1="170.80" x2="1255.50" y2="502.39" stroke="#2b83c8" stroke-width="1.35"/>
<line x1="1253.20" y1="170.80" x2="1257.80" y2="170.80" stroke="#2b83c8" stroke-width="1.8"/>
<line x1="1253.20" y1="200.95" x2="1257.80" y2="200.95" stroke="#2b83c8" stroke-width="1.8"/>
<line x1="1253.20" y1="332.08" x2="1257.80" y2="332.08" stroke="#2b83c8" stroke-width="1.8"/>
<line x1="1253.20" y1="341.12" x2="1257.80" y2="341.12" stroke="#2b83c8" stroke-width="1.8"/>
<line x1="1253.20" y1="472.25" x2="1257.80" y2="472.25" stroke="#2b83c8" stroke-width="1.8"/>
<line x1="1253.20" y1="502.39" x2="1257.80" y2="502.39" stroke="#2b83c8" stroke-width="1.8"/>
<text x="1253.30" y="188.27" font-size="9.5" fill="#2b83c8" text-anchor="end">50</text>
<text x="1253.30" y="268.91" font-size="9.5" fill="#2b83c8" text-anchor="end">217.5</text>
<text x="1253.30" y="339.00" font-size="9.5" fill="#2b83c8" text-anchor="end">15</text>
<text x="1253.30" y="409.08" font-size="9.5" fill="#2b83c8" text-anchor="end">217.5</text>
<text x="1253.30" y="489.72" font-size="9.5" fill="#2b83c8" text-anchor="end">50</text>
<line x1="1627.30" y1="200.95" x2="1627.30" y2="472.25" stroke="#2b83c8" stroke-width="1.35"/>
<line x1="1625.00" y1="200.95" x2="1629.60" y2="200.95" stroke="#2b83c8" stroke-width="1.8"/>
<line x1="1625.00" y1="472.25" x2="1629.60" y2="472.25" stroke="#2b83c8" stroke-width="1.8"/>
<line x1="1653.40" y1="170.80" x2="1653.40" y2="472.25" stroke="#2b83c8" stroke-width="1.35"/>
<line x1="1651.10" y1="170.80" x2="1655.70" y2="170.80" stroke="#2b83c8" stroke-width="1.8"/>
<line x1="1651.10" y1="472.25" x2="1655.70" y2="472.25" stroke="#2b83c8" stroke-width="1.8"/>
<line x1="1679.20" y1="170.80" x2="1679.20" y2="502.39" stroke="#2b83c8" stroke-width="1.35"/>
<line x1="1676.90" y1="170.80" x2="1681.50" y2="170.80" stroke="#2b83c8" stroke-width="1.8"/>
<line x1="1676.90" y1="502.39" x2="1681.50" y2="502.39" stroke="#2b83c8" stroke-width="1.8"/>
<text x="1630.50" y="339.50" font-size="9.5" fill="#2b83c8" text-anchor="start">450</text>
<text x="1656.50" y="324.50" font-size="9.5" fill="#2b83c8" text-anchor="start">500</text>
<text x="1682.30" y="339.50" font-size="9.5" fill="#2b83c8" text-anchor="start">550</text>
<line x1="1305.74" y1="522.30" x2="1577.05" y2="522.30" stroke="#2b83c8" stroke-width="1.35"/>
<line x1="1305.74" y1="520.00" x2="1305.74" y2="524.60" stroke="#2b83c8" stroke-width="1.8"/>
<line x1="1577.05" y1="520.00" x2="1577.05" y2="524.60" stroke="#2b83c8" stroke-width="1.8"/>
<line x1="1305.74" y1="548.40" x2="1607.19" y2="548.40" stroke="#2b83c8" stroke-width="1.35"/>
<line x1="1305.74" y1="546.10" x2="1305.74" y2="550.70" stroke="#2b83c8" stroke-width="1.8"/>
<line x1="1607.19" y1="546.10" x2="1607.19" y2="550.70" stroke="#2b83c8" stroke-width="1.8"/>
<line x1="1275.60" y1="573.90" x2="1607.19" y2="573.90" stroke="#2b83c8" stroke-width="1.35"/>
<line x1="1275.60" y1="571.60" x2="1275.60" y2="576.20" stroke="#2b83c8" stroke-width="1.8"/>
<line x1="1607.19" y1="571.60" x2="1607.19" y2="576.20" stroke="#2b83c8" stroke-width="1.8"/>
<text x="1441.40" y="533.70" font-size="9.5" fill="#2b83c8" text-anchor="middle">450</text>
<text x="1456.47" y="559.70" font-size="9.5" fill="#2b83c8" text-anchor="middle">500</text>
<text x="1441.40" y="584.70" font-size="9.5" fill="#2b83c8" text-anchor="middle">550</text>
<rect x="1190.90" y="715.50" width="397.38" height="72.00" fill="#ececec" stroke="none" stroke-width="0"/>
<path d="M1191.5 717.5 C1200 720.5 1208 721 1215.5 722.2 Q1223 723.5 1223 731 L1223 773.5 Q1223 780.5 1215.5 781.5 L1191.5 784" fill="none" stroke="#333" stroke-width="1.3"/>
<rect x="1207.50" y="751.70" width="35.30" height="33.70" fill="none" stroke="#9a9a9a" stroke-width="1.4" stroke-dasharray="4,2.5"/>
<line x1="1207.50" y1="753.50" x2="1242.80" y2="753.50" stroke="#8a8a8a" stroke-width="1.6" stroke-dasharray="4,2.5"/>
<line x1="1232.90" y1="716.50" x2="1232.90" y2="786.50" stroke="#6d6d6d" stroke-width="1.8" stroke-dasharray="4,3"/>
<line x1="1378.20" y1="716.50" x2="1378.20" y2="786.50" stroke="#8a8a8a" stroke-width="1.5" stroke-dasharray="4,3"/>
<line x1="1384.20" y1="716.50" x2="1384.20" y2="786.50" stroke="#8a8a8a" stroke-width="1.5" stroke-dasharray="4,3"/>
<line x1="1395.00" y1="716.50" x2="1395.00" y2="786.50" stroke="#8a8a8a" stroke-width="1.5" stroke-dasharray="4,3"/>
<line x1="1401.40" y1="716.50" x2="1401.40" y2="786.50" stroke="#8a8a8a" stroke-width="1.5" stroke-dasharray="4,3"/>
<line x1="1546.70" y1="716.50" x2="1546.70" y2="786.50" stroke="#6d6d6d" stroke-width="1.8" stroke-dasharray="4,3"/>
<line x1="1552.30" y1="716.50" x2="1552.30" y2="786.50" stroke="#6d6d6d" stroke-width="1.8" stroke-dasharray="4,3"/>
<path d="M1588 718.8 L1562 722.6 Q1556.7 723.5 1556.7 730 L1556.7 776 Q1556.7 781 1562 781.5 L1588 783.5" fill="none" stroke="#7a7a7a" stroke-width="1.4" stroke-dasharray="4,2.5"/>
<line x1="1557.00" y1="752.00" x2="1588.00" y2="783.00" stroke="#7a7a7a" stroke-width="1.4" stroke-dasharray="4,2.5"/>
<line x1="1561.00" y1="750.00" x2="1588.00" y2="777.00" stroke="#7a7a7a" stroke-width="1.4" stroke-dasharray="4,2.5"/>
<line x1="1192.50" y1="780.50" x2="1221.50" y2="752.50" stroke="#222" stroke-width="1.2"/>
<line x1="1195.50" y1="784.50" x2="1223.50" y2="756.50" stroke="#222" stroke-width="1.2"/>
<polygon points="1191.50,779.00 1191.50,785.00 1196.00,785.00" fill="#222" stroke="none" stroke-width="0"/>
<rect x="1536.60" y="752.00" width="36.00" height="34.80" fill="none" stroke="#111" stroke-width="1.6"/>
<line x1="1536.60" y1="752.00" x2="1572.60" y2="752.00" stroke="#111" stroke-width="2.6"/>
<line x1="1536.60" y1="780.50" x2="1572.60" y2="780.50" stroke="#111" stroke-width="1.6"/>
<line x1="1540.00" y1="755.50" x2="1570.00" y2="755.50" stroke="#888" stroke-width="1.3" stroke-dasharray="4,2.5"/>
<line x1="1540.00" y1="783.50" x2="1586.00" y2="783.50" stroke="#888" stroke-width="1.3" stroke-dasharray="4,2.5"/>
<rect x="1190.90" y="715.50" width="397.38" height="72.00" fill="none" stroke="#333" stroke-width="1.8"/>
<line x1="1227.20" y1="715.50" x2="1227.20" y2="787.50" stroke="#333" stroke-width="1.8"/>
<line x1="1190.90" y1="690.70" x2="1588.28" y2="690.70" stroke="#2b83c8" stroke-width="1.35"/>
<line x1="1190.90" y1="688.40" x2="1190.90" y2="693.00" stroke="#2b83c8" stroke-width="1.8"/>
<line x1="1227.03" y1="688.40" x2="1227.03" y2="693.00" stroke="#2b83c8" stroke-width="1.8"/>
<line x1="1384.17" y1="688.40" x2="1384.17" y2="693.00" stroke="#2b83c8" stroke-width="1.8"/>
<line x1="1395.01" y1="688.40" x2="1395.01" y2="693.00" stroke="#2b83c8" stroke-width="1.8"/>
<line x1="1552.15" y1="688.40" x2="1552.15" y2="693.00" stroke="#2b83c8" stroke-width="1.8"/>
<line x1="1588.28" y1="688.40" x2="1588.28" y2="693.00" stroke="#2b83c8" stroke-width="1.8"/>
<text x="1208.96" y="685.30" font-size="9.5" fill="#2b83c8" text-anchor="middle">50</text>
<text x="1305.60" y="685.30" font-size="9.5" fill="#2b83c8" text-anchor="middle">217.5</text>
<text x="1389.59" y="685.30" font-size="9.5" fill="#2b83c8" text-anchor="middle">15</text>
<text x="1473.58" y="685.30" font-size="9.5" fill="#2b83c8" text-anchor="middle">217.5</text>
<text x="1570.21" y="685.30" font-size="9.5" fill="#2b83c8" text-anchor="middle">50</text>
<line x1="1190.90" y1="812.60" x2="1588.28" y2="812.60" stroke="#2b83c8" stroke-width="1.35"/>
<line x1="1190.90" y1="810.30" x2="1190.90" y2="814.90" stroke="#2b83c8" stroke-width="1.8"/>
<line x1="1588.28" y1="810.30" x2="1588.28" y2="814.90" stroke="#2b83c8" stroke-width="1.8"/>
<text x="1389.59" y="825.50" font-size="9.5" fill="#2b83c8" text-anchor="middle">550</text>
<line x1="1166.00" y1="715.50" x2="1166.00" y2="787.50" stroke="#2b83c8" stroke-width="1.35"/>
<line x1="1163.70" y1="715.50" x2="1168.30" y2="715.50" stroke="#2b83c8" stroke-width="1.8"/>
<line x1="1163.70" y1="787.50" x2="1168.30" y2="787.50" stroke="#2b83c8" stroke-width="1.8"/>
<text x="1155.50" y="755.00" font-size="9.5" fill="#2b83c8" text-anchor="middle">100</text>
<line x1="1613.00" y1="715.50" x2="1613.00" y2="787.50" stroke="#2b83c8" stroke-width="1.35"/>
<line x1="1610.70" y1="715.50" x2="1615.30" y2="715.50" stroke="#2b83c8" stroke-width="1.8"/>
<line x1="1610.70" y1="787.50" x2="1615.30" y2="787.50" stroke="#2b83c8" stroke-width="1.8"/>
<text x="1625.50" y="755.00" font-size="9.5" fill="#2b83c8" text-anchor="middle">100</text>
<line x1="1536.40" y1="795.20" x2="1572.80" y2="795.20" stroke="#2b83c8" stroke-width="1.35"/>
<line x1="1536.40" y1="792.90" x2="1536.40" y2="797.50" stroke="#2b83c8" stroke-width="1.8"/>
<line x1="1572.80" y1="792.90" x2="1572.80" y2="797.50" stroke="#2b83c8" stroke-width="1.8"/>
<text x="1554.60" y="807.50" font-size="9.5" fill="#2b83c8" text-anchor="middle">50</text>
<path d="M1772.3 177.8 L1772.3 224.2 L1818.5 224.2 Z" fill="none" stroke="#111" stroke-width="1.3"/>
<line x1="1760.40" y1="224.20" x2="1831.40" y2="224.20" stroke="#111" stroke-width="1.3"/>
<line x1="1760.40" y1="227.50" x2="1831.40" y2="227.50" stroke="#333" stroke-width="1.3" stroke-dasharray="5,2.5"/>
<text x="1765.00" y="220.90" font-size="9" fill="#222" text-anchor="middle">5</text>
<text x="1760.40" y="244.50" font-size="9.8" fill="#333" text-anchor="start" textLength="63.4" lengthAdjust="spacingAndGlyphs">Schweissnaht</text>
<text x="1760.40" y="257.50" font-size="9.8" fill="#333" text-anchor="start" textLength="58.9" lengthAdjust="spacingAndGlyphs">UNP zu UNP</text>
<path d="M1772.3 289.4 L1772.3 335.6 L1818.5 335.6 Z" fill="none" stroke="#111" stroke-width="1.3"/>
<line x1="1760.40" y1="335.60" x2="1831.40" y2="335.60" stroke="#111" stroke-width="1.3"/>
<line x1="1760.40" y1="338.90" x2="1831.40" y2="338.90" stroke="#333" stroke-width="1.3" stroke-dasharray="5,2.5"/>
<text x="1765.00" y="332.30" font-size="9" fill="#222" text-anchor="middle">6</text>
<text x="1760.40" y="355.90" font-size="9.8" fill="#333" text-anchor="start" textLength="63.4" lengthAdjust="spacingAndGlyphs">Schweissnaht</text>
<text x="1760.40" y="368.90" font-size="9.8" fill="#333" text-anchor="start" textLength="58.4" lengthAdjust="spacingAndGlyphs">Steg zu UNP</text>
<path d="M1834.3 419 L1844.7 419 L1844.7 505 L1760 505 Q1760 495 1764 492 L1821.7 487.5 Q1834.3 486 1834.3 474 Z" fill="#ececec" stroke="#111" stroke-width="1.3"/>
<line x1="1834.30" y1="419.00" x2="1844.70" y2="419.00" stroke="#fff" stroke-width="1.5"/>
<path d="M1763 488 L1828 421 L1834 426 L1769 493 Z" fill="#ececec" stroke="#111" stroke-width="1.3"/>
<polygon points="1828.00,421.00 1834.30,419.00 1834.00,426.00" fill="none" stroke="#111" stroke-width="1"/>
<polygon points="1763.00,488.00 1760.50,497.00 1769.00,493.00" fill="none" stroke="#111" stroke-width="1"/>
<line x1="1751.00" y1="477.20" x2="1818.00" y2="410.60" stroke="#2b83c8" stroke-width="1.4"/>
<line x1="1749.00" y1="475.20" x2="1753.00" y2="479.20" stroke="#2b83c8" stroke-width="1.6"/>
<line x1="1816.00" y1="408.60" x2="1820.00" y2="412.60" stroke="#2b83c8" stroke-width="1.6"/>
<text x="1779.30" y="441.50" font-size="9.5" fill="#2b83c8" text-anchor="middle" transform="rotate(-45 1779.3 438.4)">55</text>
<path d="M1813 440 Q1822 444 1825 452" fill="none" stroke="#2b83c8" stroke-width="1.2"/>
<text x="1824.00" y="457.50" font-size="9" fill="#2b83c8" text-anchor="middle">45°</text>
<line x1="1760.20" y1="513.00" x2="1768.40" y2="513.00" stroke="#2b83c8" stroke-width="1.3"/>
<line x1="1760.20" y1="510.00" x2="1760.20" y2="516.00" stroke="#2b83c8" stroke-width="1.3"/>
<line x1="1768.40" y1="510.00" x2="1768.40" y2="516.00" stroke="#2b83c8" stroke-width="1.3"/>
<text x="1764.30" y="524.50" font-size="9" fill="#2b83c8" text-anchor="middle">5</text>
<clipPath id="c3d"><rect x="1652.7" y="609.5" width="267.3" height="257.5"/></clipPath>
<g clip-path="url(#c3d)">
<rect x="1652.70" y="609.50" width="267.30" height="257.50" fill="#fff" stroke="none" stroke-width="0"/>
<line x1="1783.50" y1="470.00" x2="863.50" y2="867.00" stroke="#dadada" stroke-width="0.9"/>
<line x1="1783.50" y1="470.00" x2="955.50" y2="867.00" stroke="#dadada" stroke-width="0.9"/>
<line x1="1783.50" y1="470.00" x2="1047.50" y2="867.00" stroke="#dadada" stroke-width="0.9"/>
<line x1="1783.50" y1="470.00" x2="1139.50" y2="867.00" stroke="#dadada" stroke-width="0.9"/>
<line x1="1783.50" y1="470.00" x2="1231.50" y2="867.00" stroke="#dadada" stroke-width="0.9"/>
<line x1="1783.50" y1="470.00" x2="1323.50" y2="867.00" stroke="#dadada" stroke-width="0.9"/>
<line x1="1783.50" y1="470.00" x2="1415.50" y2="867.00" stroke="#dadada" stroke-width="0.9"/>
<line x1="1783.50" y1="470.00" x2="1507.50" y2="867.00" stroke="#dadada" stroke-width="0.9"/>
<line x1="1783.50" y1="470.00" x2="1599.50" y2="867.00" stroke="#dadada" stroke-width="0.9"/>
<line x1="1783.50" y1="470.00" x2="1691.50" y2="867.00" stroke="#dadada" stroke-width="0.9"/>
<line x1="1783.50" y1="470.00" x2="1875.50" y2="867.00" stroke="#dadada" stroke-width="0.9"/>
<line x1="1783.50" y1="470.00" x2="1967.50" y2="867.00" stroke="#dadada" stroke-width="0.9"/>
<line x1="1783.50" y1="470.00" x2="2059.50" y2="867.00" stroke="#dadada" stroke-width="0.9"/>
<line x1="1783.50" y1="470.00" x2="2151.50" y2="867.00" stroke="#dadada" stroke-width="0.9"/>
<line x1="1783.50" y1="470.00" x2="2243.50" y2="867.00" stroke="#dadada" stroke-width="0.9"/>
<line x1="1783.50" y1="470.00" x2="2335.50" y2="867.00" stroke="#dadada" stroke-width="0.9"/>
<line x1="1783.50" y1="470.00" x2="2427.50" y2="867.00" stroke="#dadada" stroke-width="0.9"/>
<line x1="1783.50" y1="470.00" x2="2519.50" y2="867.00" stroke="#dadada" stroke-width="0.9"/>
<line x1="1783.50" y1="470.00" x2="2611.50" y2="867.00" stroke="#dadada" stroke-width="0.9"/>
<line x1="1783.50" y1="470.00" x2="2703.50" y2="867.00" stroke="#dadada" stroke-width="0.9"/>
<line x1="1652.00" y1="605.12" x2="1920.00" y2="605.12" stroke="#dadada" stroke-width="1.0"/>
<line x1="1652.00" y1="614.09" x2="1920.00" y2="614.09" stroke="#dadada" stroke-width="1.0"/>
<line x1="1652.00" y1="624.34" x2="1920.00" y2="624.34" stroke="#dadada" stroke-width="1.0"/>
<line x1="1652.00" y1="636.17" x2="1920.00" y2="636.17" stroke="#dadada" stroke-width="1.0"/>
<line x1="1652.00" y1="649.95" x2="1920.00" y2="649.95" stroke="#dadada" stroke-width="1.0"/>
<line x1="1652.00" y1="666.23" x2="1920.00" y2="666.23" stroke="#dadada" stroke-width="1.0"/>
<line x1="1652.00" y1="685.75" x2="1920.00" y2="685.75" stroke="#dadada" stroke-width="1.0"/>
<line x1="1652.00" y1="709.58" x2="1920.00" y2="709.58" stroke="#dadada" stroke-width="1.0"/>
<line x1="1652.00" y1="739.32" x2="1920.00" y2="739.32" stroke="#dadada" stroke-width="1.0"/>
<line x1="1652.00" y1="777.50" x2="1920.00" y2="777.50" stroke="#dadada" stroke-width="1.0"/>
<line x1="1652.00" y1="828.29" x2="1920.00" y2="828.29" stroke="#dadada" stroke-width="1.0"/>
<line x1="1652.00" y1="899.18" x2="1920.00" y2="899.18" stroke="#dadada" stroke-width="1.0"/>
<line x1="1783.50" y1="609.50" x2="1783.50" y2="867.00" stroke="#c4c4c4" stroke-width="1.2"/>
</g>
<defs><linearGradient id="gtop" x1="0" y1="0" x2="0" y2="1"><stop offset="0" stop-color="#959595"/><stop offset="1" stop-color="#b9b9b9"/></linearGradient><linearGradient id="gwall" x1="0" y1="0" x2="0" y2="1"><stop offset="0" stop-color="#8a8a8a"/><stop offset="1" stop-color="#979797"/></linearGradient></defs>
<polygon points="1659.90,787.50 1907.00,787.50 1907.50,805.80 1659.90,805.80" fill="#b1b1b1" stroke="none" stroke-width="0"/>
<line x1="1659.90" y1="805.30" x2="1907.50" y2="805.30" stroke="#9a9a9a" stroke-width="1.2"/>
<polygon points="1676.60,771.00 1905.80,771.00 1900.00,787.50 1676.60,787.50" fill="#868686" stroke="none" stroke-width="0"/>
<polygon points="1670.00,773.00 1682.00,773.00 1684.00,806.00 1662.00,806.00 1668.00,790.00" fill="#a3a3a3" stroke="none" stroke-width="0"/>
<polygon points="1666.00,778.00 1671.00,775.00 1670.00,792.00 1662.00,799.00" fill="#8a8a8a" stroke="none" stroke-width="0"/>
<polygon points="1873.80,775.80 1897.50,775.80 1897.50,804.30 1874.50,804.30" fill="#acacac" stroke="none" stroke-width="0"/>
<polygon points="1897.50,771.00 1905.80,771.00 1902.00,787.00 1907.50,805.00 1897.50,805.00" fill="#9c9c9c" stroke="none" stroke-width="0"/>
<polygon points="1711.70,672.50 1855.60,672.50 1885.70,756.30 1681.20,756.30" fill="#fff" stroke="none" stroke-width="0"/>
<polygon points="1711.70,672.50 1855.60,672.50 1853.30,700.90 1713.20,700.90" fill="url(#gwall)" stroke="none" stroke-width="0"/>
<polygon points="1711.70,672.50 1713.20,704.70 1699.50,704.70" fill="#6a6a6a" stroke="none" stroke-width="0"/>
<polygon points="1855.60,672.50 1867.00,704.70 1853.30,704.70" fill="#6a6a6a" stroke="none" stroke-width="0"/>
<polygon points="1698.70,704.70 1867.80,704.70 1868.00,707.70 1698.90,707.70" fill="#a5a5a5" stroke="none" stroke-width="0"/>
<polygon points="1698.90,707.70 1868.00,707.70 1866.50,742.40 1702.00,742.40" fill="url(#gwall)" stroke="none" stroke-width="0"/>
<polygon points="1698.90,707.70 1702.00,756.30 1680.80,756.30" fill="#6a6a6a" stroke="none" stroke-width="0"/>
<polygon points="1868.00,707.70 1884.60,756.30 1866.50,756.30" fill="#6a6a6a" stroke="none" stroke-width="0"/>
<polygon points="1781.20,672.50 1786.00,672.50 1786.60,756.30 1780.60,756.30" fill="#a6a6a6" stroke="none" stroke-width="0"/>
<path d="M1697.5 666 L1869 666 L1914.7 771 L1652.7 771 Z M1711.7 672.5 L1681.2 756.3 L1885.7 756.3 L1855.6 672.5 Z" fill="url(#gtop)" stroke="none" stroke-width="0" fill-rule="evenodd"/>
<line x1="1652.70" y1="771.00" x2="1914.70" y2="771.00" stroke="#8c8c8c" stroke-width="1.2"/>
<text x="1146.60" y="126.70" font-size="15" fill="#bdbdbd" text-anchor="start" stroke="#bdbdbd" stroke-width="0.35" textLength="76.7" lengthAdjust="spacingAndGlyphs">GRUNDRISS</text>
<text x="1146.70" y="639.70" font-size="15" fill="#bdbdbd" text-anchor="start" stroke="#bdbdbd" stroke-width="0.35" textLength="56.5" lengthAdjust="spacingAndGlyphs">SCHNITT</text>
<text x="1659.00" y="639.60" font-size="15" fill="#bdbdbd" text-anchor="start" stroke="#bdbdbd" stroke-width="0.35" textLength="77.3" lengthAdjust="spacingAndGlyphs">3D ANSICHT</text>
<text x="1757.50" y="570.40" font-size="14.5" fill="#222" text-anchor="start" textLength="151.4" lengthAdjust="spacingAndGlyphs">JSP EN-55-55-a-d-15-U4</text>
<text x="1807.20" y="588.50" font-size="14.5" fill="#222" text-anchor="start" textLength="101.7" lengthAdjust="spacingAndGlyphs">Gewicht: 32.1 kg</text>
<path d="M1873.8 121.2h7.2v2.6h-4.6v4.6h-2.6z M1900.0 121.2h-7.2v2.6h4.6v4.6h2.6z M1873.8 147.8h7.2v-2.6h-4.6v-4.6h-2.6z M1900.0 147.8h-7.2v-2.6h4.6v-4.6h2.6z" fill="#6f2282" stroke="none" stroke-width="0"/>
<path d="M1591.5 631h7.2v2.6h-4.6v4.6h-2.6z M1618.5 631h-7.2v2.6h4.6v4.6h2.6z M1591.5 657.3h7.2v-2.6h-4.6v-4.6h-2.6z M1618.5 657.3h-7.2v-2.6h4.6v-4.6h2.6z" fill="#6f2282" stroke="none" stroke-width="0"/>
<path d="M1874 628.4h7.2v2.6h-4.6v4.6h-2.6z M1900.3 628.4h-7.2v2.6h4.6v4.6h2.6z M1874 654.4h7.2v-2.6h-4.6v-4.6h-2.6z M1900.3 654.4h-7.2v-2.6h4.6v-4.6h2.6z" fill="#6f2282" stroke="none" stroke-width="0"/></svg>
</body></html>
